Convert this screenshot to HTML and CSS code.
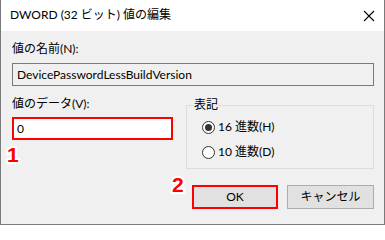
FILE: index.html
```html
<!DOCTYPE html>
<html lang="ja">
<head>
<meta charset="utf-8">
<title>DWORD (32 ビット) 値の編集</title>
<link rel="stylesheet" href="styles.css">
</head>
<body>
<div class="window">
  <div class="titlebar">
    <span class="title">DWORD (32 ビット) 値の編集</span>
    <svg class="close" width="12" height="12" viewBox="0 0 12 12" aria-hidden="true">
      <path d="M1 1 L11 11 M11 1 L1 11" stroke="#000" stroke-width="1.1" fill="none"/>
    </svg>
  </div>
  <div class="content">
    <div class="label">値の名前(N):</div>
    <div class="namebox">DevicePasswordLessBuildVersion</div>
    <div class="lower">
      <div class="left">
        <div class="label">値のデータ(V):</div>
        <div class="valuebox">0</div>
      </div>
      <div class="group">
        <span class="group-title">表記</span>
        <div class="radios">
          <div class="radio-row"><span class="radio checked"></span><span>16 進数(H)</span></div>
          <div class="radio-row"><span class="radio"></span><span>10 進数(D)</span></div>
        </div>
      </div>
    </div>
    <div class="buttons">
      <div class="btn ok">OK</div>
      <div class="btn">キャンセル</div>
    </div>
    <span class="mark mark1">1</span>
    <span class="mark mark2">2</span>
  </div>
</div>
</body>
</html>
```
FILE: styles.css
```css
html, body {
  margin: 0;
  padding: 0;
  background: #ffffff;
}
.window {
  width: 385px;
  height: 225px;
  box-sizing: border-box;
  border: 1px solid #7a7a7a;
  border-top: none;
  display: flex;
  flex-direction: column;
  font-family: Lato, "Noto Sans CJK JP", sans-serif;
  font-size: 12px;
  line-height: 16px;
  color: #000;
}
.titlebar {
  height: 31px;
  flex: none;
  background: #fff;
  display: flex;
  align-items: center;
  justify-content: space-between;
  padding: 0 9px 0 9px;
}
.title {
  font-size: 12px;
  line-height: 16px;
  margin-top: -1px;
}
.close {
  display: block;
}
.content {
  flex: 1;
  background: #f0f0f0;
  padding: 10px 10px 0 11px;
  position: relative;
}
.label {
  line-height: 16px;
  height: 16px;
}
.namebox {
  margin-top: 6px;
  height: 23px;
  box-sizing: border-box;
  border: 1px solid #7a7a7a;
  background: #f0f0f0;
  line-height: 21px;
  padding-left: 4px;
}
.lower {
  margin-top: 10px;
  display: flex;
  gap: 13px;
}
.left {
  width: 161px;
  flex: none;
}
.valuebox {
  margin-top: 5px;
  height: 23px;
  box-sizing: border-box;
  border: 2px solid #ff0000;
  background: #fff;
  line-height: 19px;
  padding-left: 3px;
}
.group {
  flex: 1;
  margin-top: 9px;
  height: 64px;
  box-sizing: border-box;
  border: 1px solid #dcdcdc;
}
.group-title {
  display: block;
  width: fit-content;
  margin: -9px 0 0 6px;
  padding: 0 1px;
  background: #f0f0f0;
  line-height: 16px;
  height: 16px;
}
.radios {
  padding: 6px 0 0 15px;
  display: flex;
  flex-direction: column;
  gap: 9px;
}
.radio-row {
  display: flex;
  align-items: center;
  gap: 3px;
  height: 16px;
  line-height: 16px;
}
.radio {
  width: 13px;
  height: 13px;
  box-sizing: border-box;
  border: 1px solid #333;
  border-radius: 50%;
  background: #fff;
  display: flex;
  align-items: center;
  justify-content: center;
}
.radio.checked::after {
  content: "";
  width: 7px;
  height: 7px;
  border-radius: 50%;
  background: #333;
}
.buttons {
  margin-top: 16px;
  display: flex;
  justify-content: flex-end;
  gap: 9px;
}
.btn {
  width: 87px;
  height: 24px;
  box-sizing: border-box;
  border: 1px solid #adadad;
  background: #e1e1e1;
  text-align: center;
  line-height: 22px;
}
.btn.ok {
  width: 86px;
  border: 2px solid #ff0000;
  line-height: 20px;
}
.mark {
  position: absolute;
  font-family: "Liberation Sans", sans-serif;
  font-weight: bold;
  font-size: 21px;
  line-height: 21px;
  color: #ff0000;
  -webkit-text-stroke: 4px #fff;
  paint-order: stroke fill;
}
.mark1 {
  left: 6px;
  top: 113px;
}
.mark2 {
  left: 171px;
  top: 143px;
}
```
